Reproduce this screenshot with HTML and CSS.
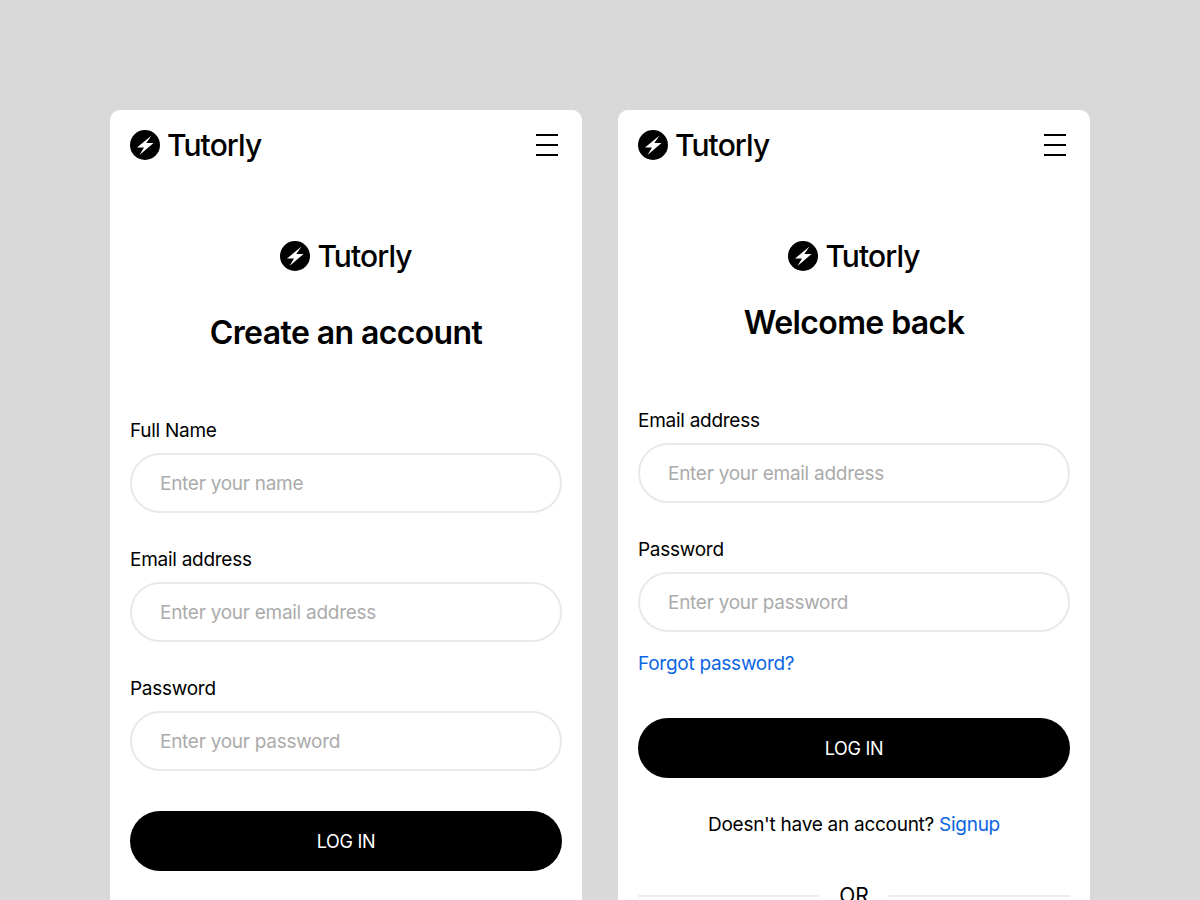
FILE: index.html
```html
<!DOCTYPE html>
<html lang="en">
<head>
    <meta charset="UTF-8">
    <meta name="viewport" content="width=device-width, initial-scale=1.0">
    <title>Tutorly</title>
    <link rel="stylesheet" href="styles.css">
</head>

<body>
    <div class="cards">
        <div class="card">
            <div class="topbar">
                <div class="logo">
                    <svg class="logo-icon" viewBox="0 0 30 30"><circle cx="15" cy="15" r="15" fill="#000"/><path d="M21.5 5.5 7 17.5h7L9.5 25l14-12h-7.2z" fill="#fff"/></svg>
                    <span>Tutorly</span>
                </div>
                <div class="menu"><span></span><span></span><span></span></div>
            </div>
            <div class="logo logo-center">
                <svg class="logo-icon" viewBox="0 0 30 30"><circle cx="15" cy="15" r="15" fill="#000"/><path d="M21.5 5.5 7 17.5h7L9.5 25l14-12h-7.2z" fill="#fff"/></svg>
                <span>Tutorly</span>
            </div>
            <h2 class="title title-signup">Create an account</h2>
            <div class="field">
                <label>Full Name</label>
                <input type="text" placeholder="Enter your name">
            </div>
            <div class="field">
                <label>Email address</label>
                <input type="text" placeholder="Enter your email address">
            </div>
            <div class="field">
                <label>Password</label>
                <input type="text" placeholder="Enter your password">
            </div>
            <a href="#" class="btn btn-signup">LOG IN</a>
        </div>

        <div class="card">
            <div class="topbar">
                <div class="logo">
                    <svg class="logo-icon" viewBox="0 0 30 30"><circle cx="15" cy="15" r="15" fill="#000"/><path d="M21.5 5.5 7 17.5h7L9.5 25l14-12h-7.2z" fill="#fff"/></svg>
                    <span>Tutorly</span>
                </div>
                <div class="menu"><span></span><span></span><span></span></div>
            </div>
            <div class="logo logo-center">
                <svg class="logo-icon" viewBox="0 0 30 30"><circle cx="15" cy="15" r="15" fill="#000"/><path d="M21.5 5.5 7 17.5h7L9.5 25l14-12h-7.2z" fill="#fff"/></svg>
                <span>Tutorly</span>
            </div>
            <h2 class="title title-login">Welcome back</h2>
            <div class="field">
                <label>Email address</label>
                <input type="text" placeholder="Enter your email address">
            </div>
            <div class="field">
                <label>Password</label>
                <input type="text" placeholder="Enter your password">
            </div>
            <a href="#" class="link forgot">Forgot password?</a>
            <a href="#" class="btn btn-login">LOG IN</a>
            <p class="switch">Doesn't have an account? <a href="#" class="link">Signup</a></p>
            <div class="divider"><span>OR</span></div>
        </div>
    </div>
</body>
</html>
```

FILE: styles.css
```css
* {
    box-sizing: border-box;
}

html, body {
    height: 900px;
    overflow: hidden;
}

body {
    font-family: 'Inter', sans-serif;
    background-color: #d9d9d9;
    color: #000;
    margin: 0;
    padding: 110px 110px 0;
}

.cards {
    display: flex;
    gap: 36px;
    align-items: flex-start;
}

.card {
    width: 472px;
    height: 900px;
    flex: none;
    background: white;
    border-radius: 10px;
    padding: 20px;
}

.topbar {
    display: flex;
    justify-content: space-between;
    align-items: center;
    height: 30px;
}

.logo {
    display: flex;
    align-items: center;
    gap: 7px;
    font-size: 30px;
    font-weight: 550;
    letter-spacing: -0.9px;
    line-height: 32px;
}

.logo-icon {
    width: 30px;
    height: 30px;
    flex: none;
}

.logo-center {
    justify-content: center;
    margin-top: 80px;
}

.menu {
    display: flex;
    flex-direction: column;
    gap: 8px;
    width: 22px;
    margin-right: 4px;
}

.menu span {
    display: block;
    height: 2px;
    background: #000;
}

.title {
    font-size: 32px;
    font-weight: 600;
    letter-spacing: -0.6px;
    line-height: 40px;
    text-align: center;
    margin: 0;
}

.title-signup {
    margin-top: 41px;
    margin-bottom: 66px;
}

.title-login {
    margin-top: 31px;
    margin-bottom: 66px;
}

.field {
    margin-bottom: 35px;
}

.field label {
    display: block;
    font-size: 19px;
    line-height: 24px;
    letter-spacing: -0.27px;
    margin-bottom: 10px;
}

.field input {
    display: block;
    width: 100%;
    height: 60px;
    border: 2px solid #e9e9e9;
    border-radius: 30px;
    padding: 0 28px;
    font-family: inherit;
    font-size: 19px;
    letter-spacing: -0.27px;
    background: white;
    outline: none;
}

.field input::placeholder {
    color: #ababab;
    opacity: 1;
}

.link {
    color: #0b66e4;
    text-decoration: none;
}

.forgot {
    display: block;
    font-size: 19px;
    line-height: 24px;
    letter-spacing: -0.27px;
    margin-top: -15px;
}

.btn {
    display: block;
    height: 60px;
    line-height: 61px;
    background: #000;
    color: white;
    border-radius: 30px;
    text-align: center;
    text-decoration: none;
    font-size: 18px;
    font-weight: 400;
    letter-spacing: -0.3px;
}

.btn-signup {
    margin-top: 40px;
}

.btn-login {
    margin-top: 42px;
}

.switch {
    font-size: 19px;
    line-height: 24px;
    letter-spacing: -0.27px;
    text-align: center;
    margin: 35px 0 0;
}

.divider {
    display: flex;
    align-items: center;
    gap: 20px;
    margin-top: 47px;
    font-size: 21px;
    line-height: 24px;
}

.divider::before, .divider::after {
    content: "";
    flex: 1;
    height: 2px;
    background: #ececec;
}
```
